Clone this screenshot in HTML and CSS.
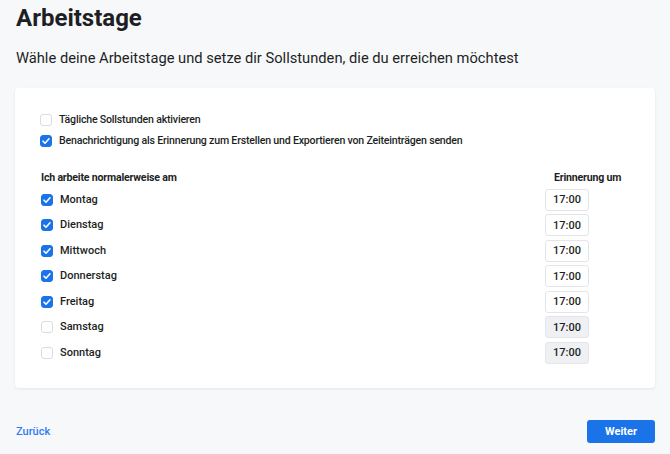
FILE: index.html
```html
<!DOCTYPE html>
<html lang="de">
<head>
    <meta charset="UTF-8">
    <meta name="viewport" content="width=device-width, initial-scale=1.0">
    <title>Arbeitstage</title>
    <link rel="stylesheet" href="styles.css">
</head>
<body>
    <div class="page">
        <h1>Arbeitstage</h1>
        <p class="lead">Wähle deine Arbeitstage und setze dir Sollstunden, die du erreichen möchtest</p>

        <div class="card">
            <div class="options">
                <label class="check">
                    <input type="checkbox">
                    <span class="box"></span>
                    <span>Tägliche Sollstunden aktivieren</span>
                </label>
                <label class="check">
                    <input type="checkbox" checked>
                    <span class="box"></span>
                    <span>Benachrichtigung als Erinnerung zum Erstellen und Exportieren von Zeiteinträgen senden</span>
                </label>
            </div>

            <div class="days">
                <div class="days-head">Ich arbeite normalerweise am</div>
                <div class="time-head">Erinnerung um</div>

                <label class="check day"><input type="checkbox" checked><span class="box"></span><span>Montag</span></label>
                <input class="time" type="text" value="17:00">

                <label class="check day"><input type="checkbox" checked><span class="box"></span><span>Dienstag</span></label>
                <input class="time" type="text" value="17:00">

                <label class="check day"><input type="checkbox" checked><span class="box"></span><span>Mittwoch</span></label>
                <input class="time" type="text" value="17:00">

                <label class="check day"><input type="checkbox" checked><span class="box"></span><span>Donnerstag</span></label>
                <input class="time" type="text" value="17:00">

                <label class="check day"><input type="checkbox" checked><span class="box"></span><span>Freitag</span></label>
                <input class="time" type="text" value="17:00">

                <label class="check day"><input type="checkbox"><span class="box"></span><span>Samstag</span></label>
                <input class="time" type="text" value="17:00" disabled>

                <label class="check day"><input type="checkbox"><span class="box"></span><span>Sonntag</span></label>
                <input class="time" type="text" value="17:00" disabled>
            </div>
        </div>

        <div class="footer">
            <a href="#" class="back">Zurück</a>
            <button class="next">Weiter</button>
        </div>
    </div>
</body>
</html>
```

FILE: styles.css
```css
* {
    box-sizing: border-box;
    margin: 0;
    padding: 0;
}

body {
    font-family: Roboto, 'Noto Sans', sans-serif;
    background-color: #f7f8fa;
    color: #1d1f24;
}

.page {
    padding: 3px 15px 0 15px;
}

h1 {
    font-size: 24px;
    font-weight: 700;
    line-height: 30px;
    padding-left: 1px;
}

.lead {
    font-size: 14.7px;
    line-height: 20px;
    margin-top: 15px;
    padding-left: 1px;
}

.card {
    margin-top: 20px;
    background: white;
    border-radius: 4px;
    box-shadow: 0 1px 3px rgba(0,0,0,0.08);
    padding: 26px 33px 24px 25px;
    height: 300px;
}

.options {
    display: flex;
    flex-direction: column;
    gap: 9px;
}

.check {
    display: flex;
    align-items: center;
    font-size: 10.6px;
    font-weight: 500;
    letter-spacing: -0.2px;
    line-height: 12px;
    cursor: pointer;
}

.check input {
    display: none;
}

.check .box {
    width: 12px;
    height: 12px;
    border: 1px solid #d9dce1;
    border-radius: 3px;
    margin-right: 7px;
    flex-shrink: 0;
    background: white;
}

.check input:checked + .box {
    background: #1a73e8 url("data:image/svg+xml,%3Csvg xmlns='http://www.w3.org/2000/svg' viewBox='0 0 12 12'%3E%3Cpath d='M3 6.2l2 2 4-4.4' fill='none' stroke='white' stroke-width='1.6' stroke-linecap='round' stroke-linejoin='round'/%3E%3C/svg%3E") center / 12px no-repeat;
    border-color: #1a73e8;
}

.days {
    margin-top: 24px;
    display: grid;
    grid-template-columns: 1fr 77px;
    grid-template-rows: 14px;
    grid-auto-rows: 22px;
    row-gap: 3.5px;
    align-items: center;
}

.days-head,
.time-head {
    font-size: 10.6px;
    font-weight: 700;
    letter-spacing: -0.2px;
    line-height: 14px;
    white-space: nowrap;
}

.days-head {
    padding-left: 1px;
}

.time-head {
    padding-left: 9px;
}

.day {
    padding-left: 1px;
    letter-spacing: 0;
    font-size: 11px;
}

.time {
    width: 44px;
    height: 22px;
    border: 1px solid #e3e5e9;
    border-radius: 3px;
    background: white;
    font-family: inherit;
    font-size: 11px;
    font-weight: 500;
    color: #1d1f24;
    text-align: center;
    outline: none;
}

.time:disabled {
    background: #eef0f3;
    color: #1d1f24;
}

.footer {
    display: flex;
    justify-content: space-between;
    align-items: center;
    margin-top: 32px;
}

.back {
    color: #2f7cf6;
    font-size: 11px;
    font-weight: 500;
    text-decoration: none;
    padding-left: 1px;
}

.next {
    width: 68px;
    height: 23px;
    background: #1a73e8;
    color: white;
    border: none;
    border-radius: 3px;
    font-family: inherit;
    font-size: 11px;
    font-weight: 700;
    cursor: pointer;
}
```
